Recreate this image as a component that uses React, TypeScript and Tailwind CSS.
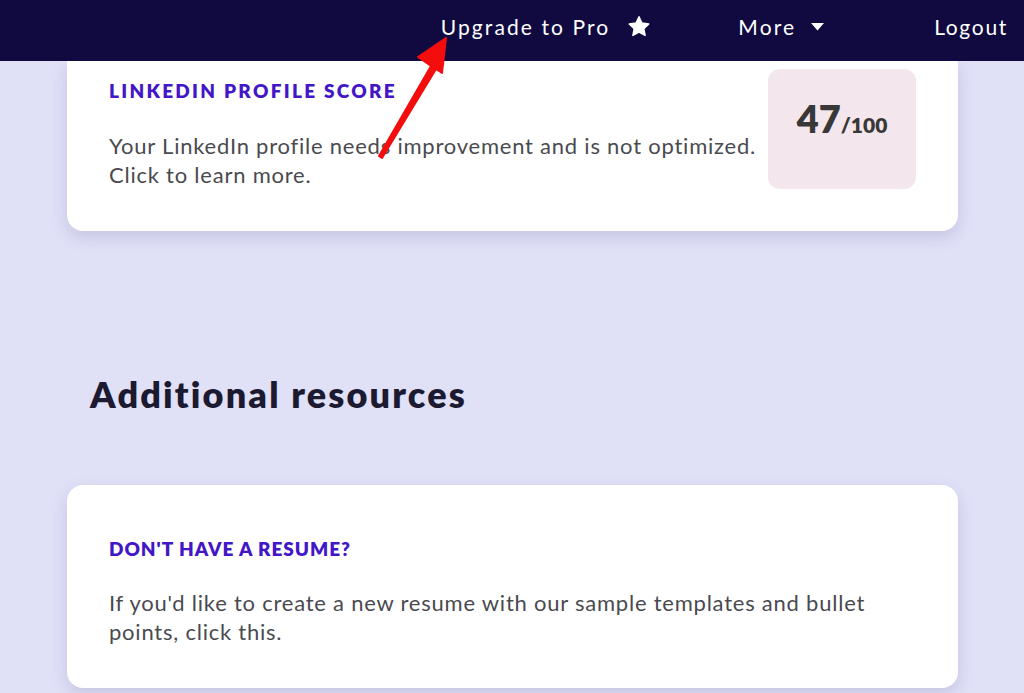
const font = { fontFamily: "Lato, 'Open Sans', sans-serif" };

function Star() {
  return (
    <svg width="24" height="23" viewBox="0 0 24 24" fill="white">
      <path d="M12 1.8l3.1 6.6 7.1.9-5.2 4.9 1.4 7.1L12 17.8l-6.4 3.5 1.4-7.1-5.2-4.9 7.1-.9z" strokeLinejoin="round" stroke="white" strokeWidth="1.5" />
    </svg>
  );
}

export default function App() {
  return (
    <div className="relative w-[1024px] h-[693px] overflow-hidden bg-[#e0e0f7]" style={font}>
      <nav className="h-[61px] bg-[#110a40] flex items-center justify-end pr-[16px] pb-[8px] text-white text-[21px] tracking-[0.1em] relative z-10">
        <div className="flex items-center gap-[17px]">
          <span>Upgrade to Pro</span>
          <Star />
        </div>
        <div className="flex items-center gap-[15px] ml-[87px]">
          <span>More</span>
          <svg width="13" height="8" viewBox="0 0 13 8" fill="white">
            <path d="M0 0h13L6.5 7.5z" />
          </svg>
        </div>
        <span className="ml-[110px] tracking-[0.08em]">Logout</span>
      </nav>

      <main className="px-[67px] pr-[66px]">
        <div className="bg-white rounded-b-2xl shadow-[0_6px_16px_rgba(80,80,140,0.18)] flex justify-between pl-[42px] pr-[42px] pt-[8px] pb-[42px]">
          <div className="pt-[10px]">
            <h2 className="text-[#4316c8] font-extrabold text-[19px] tracking-[0.12em] leading-[24px]">
              LINKEDIN PROFILE SCORE
            </h2>
            <p className="mt-[28px] text-[#4a4a4f] text-[22px] leading-[29px] tracking-[0.035em]">
              Your LinkedIn profile needs improvement and is not optimized.
              <br />
              Click to learn more.
            </p>
          </div>
          <div className="w-[148px] h-[120px] rounded-xl bg-[#f3e6ec] flex justify-center pt-[30px] shrink-0">
            <div className="text-[#383838] font-extrabold">
              <span className="text-[38px] leading-none">47</span>
              <span className="text-[21px]">/100</span>
            </div>
          </div>
        </div>

        <h1 className="mt-[141px] ml-[23px] text-[36px] font-extrabold text-[#1b1a30] tracking-[0.06em] leading-[44px]">
          Additional resources
        </h1>

        <div className="mt-[69px] bg-white rounded-2xl shadow-[0_6px_16px_rgba(80,80,140,0.18)] pl-[42px] pr-[42px] pt-[52px] pb-[46px] h-[203px]">
          <h2 className="text-[#4316c8] font-extrabold text-[19px] tracking-[0.05em] leading-[24px]">
            DON'T HAVE A RESUME?
          </h2>
          <p className="mt-[27px] text-[#4a4a4f] text-[22px] leading-[29px] tracking-[0.035em] max-w-[800px]">
            If you'd like to create a new resume with our sample templates and bullet points, click this.
          </p>
        </div>
      </main>

      <svg className="absolute left-0 top-0 z-20 pointer-events-none" width="1024" height="693">
        <path d="M379 156 L431 66 L418 57 L446 38 L442 73 L436 69 L382 158 Z" fill="#f30d0d" strokeLinejoin="round" stroke="#f30d0d" strokeWidth="2" />
      </svg>
    </div>
  );
}
